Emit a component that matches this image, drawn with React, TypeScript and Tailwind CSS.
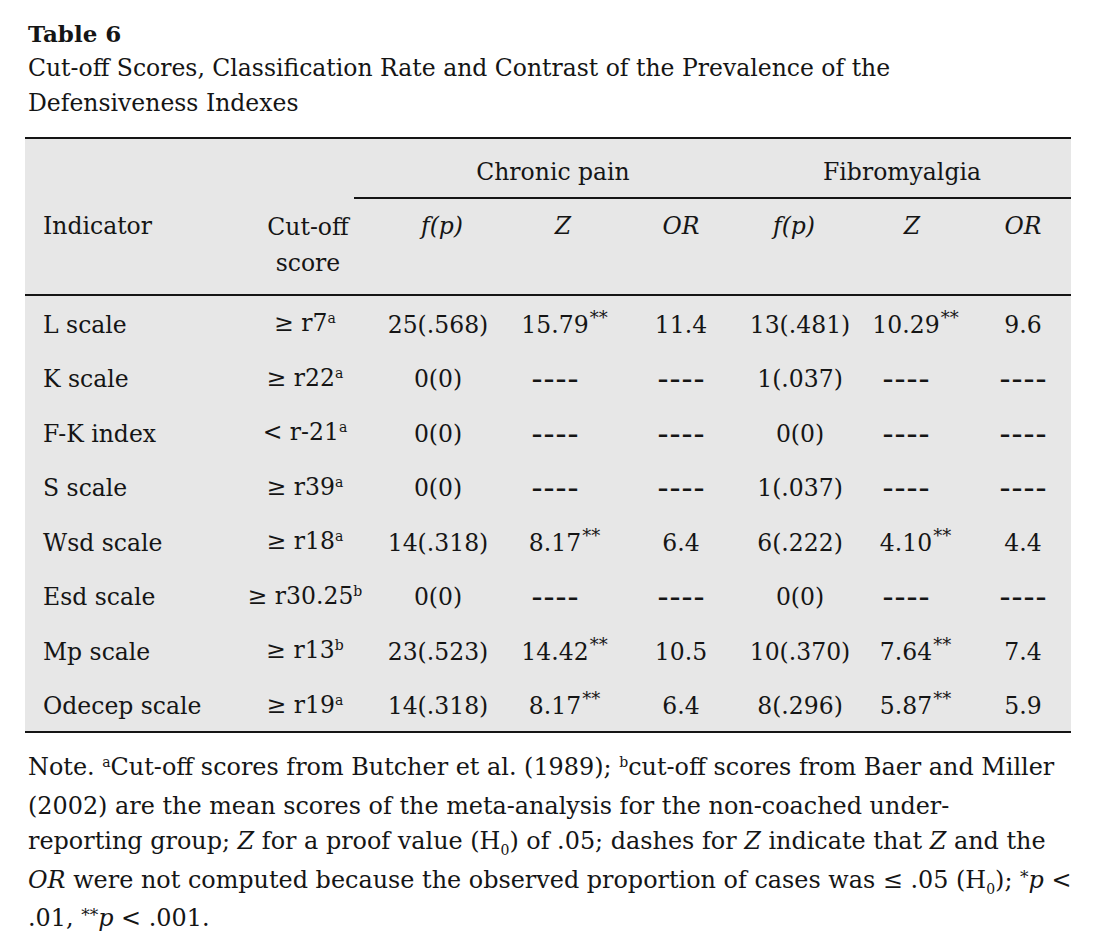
import React from "react";

type Row = {
  name: string;
  cut: string;
  sup: string;
  c1: string;
  c2: string;
  c2s: boolean;
  c3: string;
  f1: string;
  f2: string;
  f2s: boolean;
  f3: string;
};

const D = "-";

const rows: Row[] = [
  { name: "L scale", cut: "≥ r7", sup: "a", c1: "25(.568)", c2: "15.79", c2s: true, c3: "11.4", f1: "13(.481)", f2: "10.29", f2s: true, f3: "9.6" },
  { name: "K scale", cut: "≥ r22", sup: "a", c1: "0(0)", c2: D, c2s: false, c3: D, f1: "1(.037)", f2: D, f2s: false, f3: D },
  { name: "F-K index", cut: "< r-21", sup: "a", c1: "0(0)", c2: D, c2s: false, c3: D, f1: "0(0)", f2: D, f2s: false, f3: D },
  { name: "S scale", cut: "≥ r39", sup: "a", c1: "0(0)", c2: D, c2s: false, c3: D, f1: "1(.037)", f2: D, f2s: false, f3: D },
  { name: "Wsd scale", cut: "≥ r18", sup: "a", c1: "14(.318)", c2: "8.17", c2s: true, c3: "6.4", f1: "6(.222)", f2: "4.10", f2s: true, f3: "4.4" },
  { name: "Esd scale", cut: "≥ r30.25", sup: "b", c1: "0(0)", c2: D, c2s: false, c3: D, f1: "0(0)", f2: D, f2s: false, f3: D },
  { name: "Mp scale", cut: "≥ r13", sup: "b", c1: "23(.523)", c2: "14.42", c2s: true, c3: "10.5", f1: "10(.370)", f2: "7.64", f2s: true, f3: "7.4" },
  { name: "Odecep scale", cut: "≥ r19", sup: "a", c1: "14(.318)", c2: "8.17", c2s: true, c3: "6.4", f1: "8(.296)", f2: "5.87", f2s: true, f3: "5.9" },
];

function Dash() {
  return <span className="text-[21px] tracking-[1.5px] pl-[1.5px] relative top-[-1px] font-semibold">––––</span>;
}

function Val({ v, s }: { v: string; s?: boolean }) {
  if (v === D) return <Dash />;
  return (
    <span className="relative">
      {v}
      {s && (
        <span className="absolute left-full top-[-2px] text-[18px] pl-[1px] leading-[24px]">**</span>
      )}
    </span>
  );
}

function Cell({ w, children }: { w: string; children: React.ReactNode }) {
  return <div className={`${w} flex justify-center whitespace-nowrap`}>{children}</div>;
}

export default function App() {
  return (
    <div
      className="w-[1100px] h-[941px] bg-white text-[#151515] text-[23.5px] leading-[35px]"
      style={{ fontFamily: '"DejaVu Serif", serif' }}
    >
      <div className="pl-[28px] pt-[16px]">
        <div className="font-bold text-[23px]">Table 6</div>
        <div>Cut-off Scores, Classification Rate and Contrast of the Prevalence of the</div>
        <div>Defensiveness Indexes</div>
      </div>

      <div className="ml-[25px] w-[1046px] mt-[16px] border-t-2 border-b-2 border-[#151515] bg-[#e7e7e7]">
        {/* header row 1 */}
        <div className="flex h-[60px]">
          <div className="w-[329px]" />
          <div className="w-[717px] flex border-b-2 border-[#151515] pt-[16px]">
            <div className="w-[398px] flex justify-center">Chronic pain</div>
            <div className="w-[300px] flex justify-center">Fibromyalgia</div>
          </div>
        </div>
        {/* header row 2 */}
        <div className="flex h-[97px] pt-[10px] border-b-2 border-[#151515]">
          <div className="w-[220px] pl-[18px]">Indicator</div>
          <div className="w-[120px] flex flex-col items-center leading-[36px] pl-[6px]">
            <span>Cut-off</span>
            <span>score</span>
          </div>
          <Cell w="w-[146px]"><span className="italic pl-[8px]">f(p)</span></Cell>
          <Cell w="w-[88px]"><span className="italic pl-[16px]">Z</span></Cell>
          <Cell w="w-[164px]"><span className="italic">OR</span></Cell>
          <Cell w="w-[74px]"><span className="italic pr-[12px]">f(p)</span></Cell>
          <Cell w="w-[138px]"><span className="italic pl-[12px]">Z</span></Cell>
          <Cell w="w-[96px]"><span className="italic">OR</span></Cell>
        </div>
        {/* body */}
        <div className="h-[435px] pt-[2px]">
          {rows.map((r) => (
            <div key={r.name} className="flex h-[54.5px] items-center">
              <div className="w-[220px] pl-[18px] whitespace-nowrap">{r.name}</div>
              <Cell w="w-[120px]">
                <span>
                  {r.cut}
                  <span className="relative top-[-8px] text-[14px]">{r.sup}</span>
                </span>
              </Cell>
              <Cell w="w-[146px]"><Val v={r.c1} /></Cell>
              <Cell w="w-[88px]"><Val v={r.c2} s={r.c2s} /></Cell>
              <Cell w="w-[164px]"><Val v={r.c3} /></Cell>
              <Cell w="w-[74px]"><Val v={r.f1} /></Cell>
              <Cell w="w-[138px]"><Val v={r.f2} s={r.f2s} /></Cell>
              <Cell w="w-[96px]"><Val v={r.f3} /></Cell>
            </div>
          ))}
        </div>
      </div>

      <div className="pl-[28px] mt-[17px] leading-[35.5px] whitespace-nowrap text-[23.9px]">
        <div>
          Note. <span className="relative top-[-8px] text-[14px]">a</span>Cut-off scores from Butcher et al. (1989);{" "}
          <span className="relative top-[-8px] text-[14px]">b</span>cut-off scores from Baer and Miller
        </div>
        <div>(2002) are the mean scores of the meta-analysis for the non-coached under-</div>
        <div>
          reporting group; <i>Z</i> for a proof value (H<span className="relative top-[6px] text-[14px]">0</span>) of .05; dashes for <i>Z</i> indicate that <i>Z</i> and the
        </div>
        <div>
          <i>OR</i> were not computed because the observed proportion of cases was ≤ .05 (H
          <span className="relative top-[6px] text-[14px]">0</span>); <span className="relative top-[-5px] text-[17px]">*</span><i>p</i> &lt;
        </div>
        <div>
          .01, <span className="relative top-[-5px] text-[17px]">**</span><i>p</i> &lt; .001.
        </div>
      </div>
    </div>
  );
}
